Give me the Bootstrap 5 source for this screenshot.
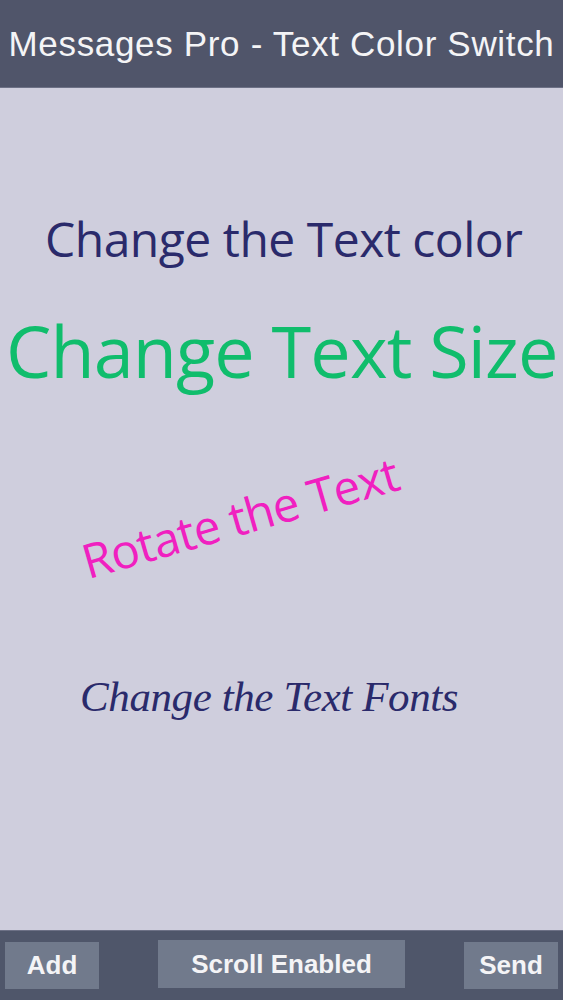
<!DOCTYPE html>
<html lang="en"><head><meta charset="utf-8"><title>Messages Pro</title>
<link rel="stylesheet" href="https://cdn.jsdelivr.net/npm/bootstrap@5.3.0/dist/css/bootstrap.min.css">
<style>
html,body{height:1000px;overflow:hidden}
body{background:#cfcedd;font-family:"Liberation Sans",Arial,sans-serif}
.top-strip{height:88px;background:#50556a;color:#f4f4f6;font-size:35px;line-height:40px;letter-spacing:.67px;padding-top:24px;white-space:nowrap;border-bottom:1px solid #6d7186}
.canvas-area{height:842px;position:relative}
.free-text{position:absolute;white-space:nowrap;line-height:1;font-family:"Open Sans","Noto Sans",sans-serif}
.t-color{left:45px;top:127px;font-size:48px;color:#2a2a6b;letter-spacing:-.5px}
.t-size{left:6px;top:226px;font-size:72px;color:#10bd6c;letter-spacing:-.9px}
.t-rotate{left:83px;top:450px;font-size:47.5px;color:#f020c0;letter-spacing:-.7px;transform:rotate(-16deg);transform-origin:left center}
.t-fonts{left:80px;top:587px;font-size:43px;color:#2a2a6b;font-family:"Liberation Serif",serif;font-style:italic;letter-spacing:-.4px}
.bottom-strip{height:70px;background:#4f566a;padding:9px 5px 0;border-top:1px solid #6d7186}
.tool-btn{background:#717a8c;color:#f4f4f6;font-weight:700;font-size:26px;border:0;border-radius:0;padding:0;display:flex;align-items:center;justify-content:center}
.tool-btn:hover{background:#717a8c;color:#f4f4f6}
.b-add{width:94px;height:47px;margin-top:2px}
.b-scroll{width:247px;height:48px}
.b-send{width:94px;height:47px;margin-top:2px}
</style></head><body>
<div class="top-strip text-center">Messages Pro - Text Color Switch</div>
<div class="canvas-area">
<div class="free-text t-color">Change the Text color</div>
<div class="free-text t-size">Change Text Size</div>
<div class="free-text t-rotate">Rotate the Text</div>
<div class="free-text t-fonts">Change the Text Fonts</div>
</div>
<div class="bottom-strip d-flex justify-content-between align-items-start">
<button class="btn tool-btn b-add">Add</button>
<button class="btn tool-btn b-scroll">Scroll Enabled</button>
<button class="btn tool-btn b-send">Send</button>
</div>
<script src="https://cdn.jsdelivr.net/npm/bootstrap@5.3.0/dist/js/bootstrap.bundle.min.js"></script>
</body></html>
